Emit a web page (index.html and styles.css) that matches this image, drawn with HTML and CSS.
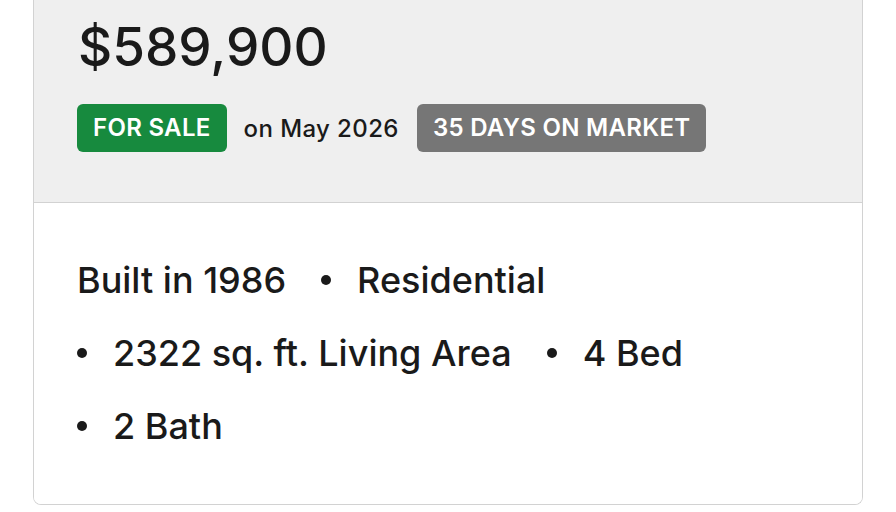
FILE: index.html
```html
<!DOCTYPE html>
<html lang="en">

<head>
  <meta charset="UTF-8">
  <meta name="viewport" content="width=device-width, initial-scale=1.0">
  <title>Listing</title>
  <link rel="stylesheet" href="styles.css">
</head>

<body>
  <div class="listing-card">
    <div class="listing-head">
      <div class="price">$589,900</div>
      <div class="status-row">
        <span class="badge badge-sale">FOR SALE</span>
        <span class="listed-on">on May 2026</span>
        <span class="badge badge-days">35 DAYS ON MARKET</span>
      </div>
    </div>
    <div class="listing-body">
      <ul class="facts">
        <li>Built in 1986</li>
        <li>Residential</li>
        <li>2322 sq. ft. Living Area</li>
        <li>4 Bed</li>
        <li>2 Bath</li>
      </ul>
    </div>
  </div>
</body>

</html>
```

FILE: styles.css
```css
body,
html {
  margin: 0;
  background: #fff;
  font-family: Inter, "Liberation Sans", Arial, sans-serif;
  color: #1a1a1a;
}

.listing-card {
  margin: 0 33px 0 33px;
  border: 1px solid #d2d2d2;
  border-top: none;
  border-radius: 0 0 8px 8px;
  overflow: hidden;
}

.listing-head {
  background-color: #efefef;
  padding: 12px 43px 50px;
  border-bottom: 1px solid #d2d2d2;
}

.price {
  font-size: 53px;
  font-weight: 450;
  line-height: 70px;
  margin-bottom: 22px;
  margin-left: 1px;
}

.status-row {
  display: flex;
  align-items: center;
  gap: 17px;
}

.badge {
  display: inline-block;
  padding: 10px 16px;
  border-radius: 6px;
  color: #fff;
  font-size: 24px;
  font-weight: 600;
  line-height: 28px;
  letter-spacing: 0.3px;
}

.badge-sale {
  background-color: #178a3e;
}

.badge-days {
  background-color: #767676;
}

.listed-on {
  font-size: 24px;
  font-weight: 500;
  letter-spacing: 0.4px;
  margin-right: 1px;
}

.listing-body {
  background: #fff;
  padding: 56px 43px 57px;
}

.facts {
  list-style: none;
  margin: 0;
  padding: 0;
  display: flex;
  flex-wrap: wrap;
  column-gap: 35px;
  row-gap: 31px;
  font-size: 36px;
  font-weight: 500;
  line-height: 42px;
}

.facts li {
  display: flex;
  align-items: center;
}

/* every fact after the first gets a dot in front */
.facts li + li::before {
  content: "";
  width: 10px;
  height: 10px;
  border-radius: 50%;
  background: #1a1a1a;
  margin-right: 26px;
}
```
